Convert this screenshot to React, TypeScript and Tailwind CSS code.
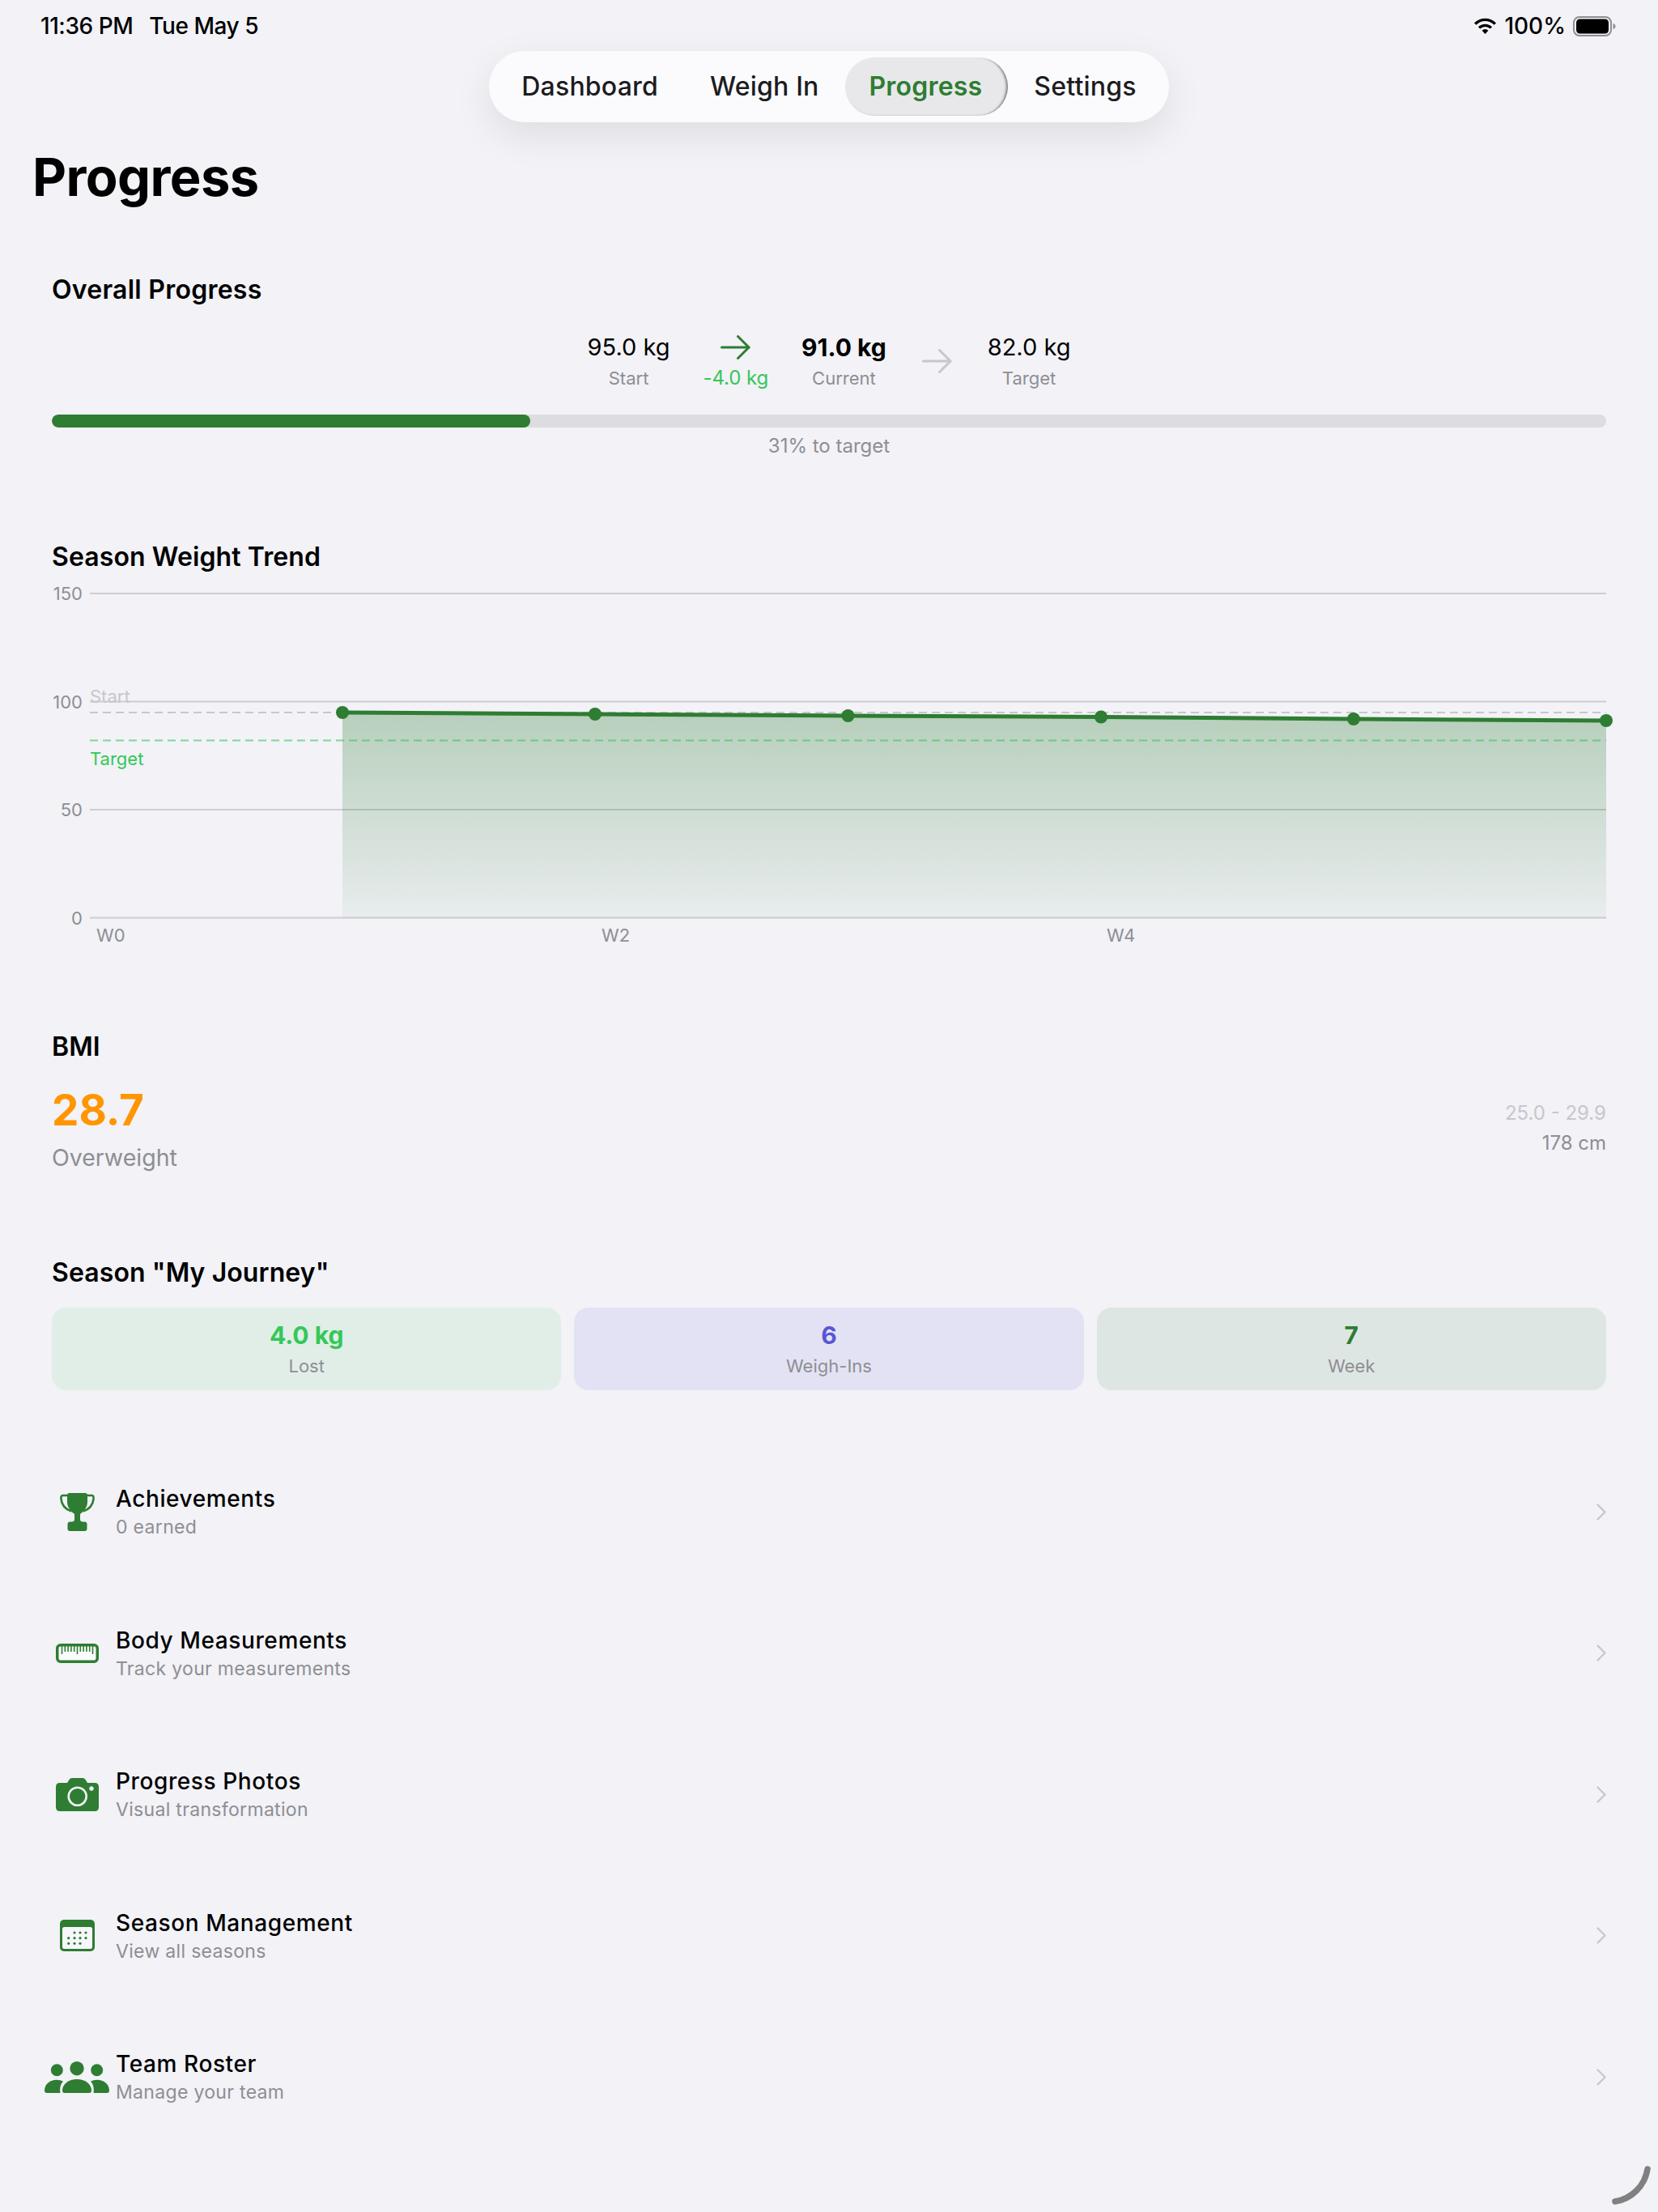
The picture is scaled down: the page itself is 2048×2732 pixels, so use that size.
import React from 'react';

const green = '#2e7d32';
const points = [
  [423, 880],
  [735, 882],
  [1047.5, 884],
  [1360, 885.5],
  [1672, 888],
  [1984, 890],
];

function Wifi() {
  return (
    <svg width="29" height="20" viewBox="0 0 29 20" className="shrink-0" fill="none" stroke="#000" strokeWidth="3.4">
      <path d="M2.2 7.6A17 17 0 0 1 26.8 7.6" />
      <path d="M7.1 12.4A10.5 10.5 0 0 1 21.9 12.4" />
      <path d="M14.5 20L10.6 15.7A5.5 5.5 0 0 1 18.4 15.7Z" fill="#000" stroke="none" />
    </svg>
  );
}

function Battery() {
  return (
    <svg width="53" height="25" viewBox="0 0 53 25" className="shrink-0">
      <rect x="1" y="1" width="46" height="23" rx="7" fill="none" stroke="#8e8e93" strokeWidth="2" />
      <rect x="4" y="3.5" width="40" height="18" rx="4.5" fill="#000" />
      <path d="M49.5 9C51.5 9.5 52.5 11 52.5 12.5C52.5 14 51.5 15.5 49.5 16Z" fill="#8e8e93" />
    </svg>
  );
}

function Arrow({ color }: { color: string }) {
  return (
    <svg width="37" height="30" viewBox="0 0 37 30" fill="none" stroke={color} strokeWidth="3" strokeLinecap="round" strokeLinejoin="round">
      <path d="M1.5 15H35" />
      <path d="M21.5 1.5L35 15L21.5 28.5" />
    </svg>
  );
}

function Trophy() {
  return (
    <svg width="43" height="47" viewBox="0 0 43 47" fill={green}>
      <path d="M10 3H3.5C1.5 3 1.2 5 1.6 8C2.4 15 7 20 14 22.5M33 3H39.5C41.5 3 41.8 5 41.4 8C40.6 15 36 20 29 22.5" fill="none" stroke={green} strokeWidth="2.6" />
      <path d="M9 3Q9 0 12 0H31Q34 0 34 3V11C34 18 29 23 25 26V33Q25 35 28 36H15Q18 35 18 33V26C14 23 9 18 9 11Z" />
      <rect x="9.5" y="35.5" width="24" height="11.5" rx="3" />
    </svg>
  );
}

function Ruler() {
  const ticks = Array.from({ length: 11 }, (_, i) => 7.5 + i * 3.8);
  return (
    <svg width="53" height="24" viewBox="0 0 53 24" fill="none" stroke={green}>
      <rect x="1.75" y="1.75" width="49.5" height="20.5" rx="4" strokeWidth="3.5" fill="#fbfbfd" />
      {ticks.map((x, i) => (
        <path key={x} d={`M${x} 3V${i % 5 === 0 ? 13 : 10}`} strokeWidth="1.6" />
      ))}
    </svg>
  );
}

function Camera() {
  return (
    <svg width="53" height="41" viewBox="0 0 53 41">
      <path d="M5 6H14L16.5 2Q17.7 0 20 0H33Q35.3 0 36.5 2L39 6H48Q53 6 53 11V36Q53 41 48 41H5Q0 41 0 36V11Q0 6 5 6Z" fill={green} />
      <circle cx="26.7" cy="22.7" r="11" fill="none" stroke="#f2f2f7" strokeWidth="2.6" />
      <circle cx="44" cy="13" r="2.7" fill="#f2f2f7" />
    </svg>
  );
}

function Calendar() {
  const dots = [
    [18, 16], [25, 16], [32, 16],
    [10.7, 22.7], [18, 22.7], [25, 22.7], [32, 22.7],
    [10.7, 29.3], [18, 29.3], [25, 29.3],
  ];
  return (
    <svg width="43" height="39" viewBox="0 0 43 39">
      <rect width="43" height="39" rx="5" fill={green} />
      <rect x="3" y="9" width="37" height="27" rx="2.5" fill="#f7f7fb" />
      {dots.map(([x, y]) => (
        <circle key={`${x}-${y}`} cx={x} cy={y} r="1.6" fill={green} />
      ))}
    </svg>
  );
}

function People() {
  return (
    <svg width="80" height="39" viewBox="0 0 80 39" fill={green} className="shrink-0">
      <circle cx="40" cy="8.7" r="8.7" />
      <circle cx="15.3" cy="10.7" r="7.5" />
      <circle cx="64.7" cy="10.7" r="7.5" />
      <path d="M22 36C22 28 30 22 40 22C50 22 58 28 58 36Q58 39 55 39H25Q22 39 22 36Z" />
      <path d="M0 36C0 28 7 22.7 15 22.7C18 22.7 21 23.4 23 24.8C20 28 18.6 32 19.4 39H3Q0 39 0 36Z" />
      <path d="M80 36C80 28 73 22.7 65 22.7C62 22.7 59 23.4 57 24.8C60 28 61.4 32 60.6 39H77Q80 39 80 36Z" />
    </svg>
  );
}

function Chevron() {
  return (
    <svg width="12" height="21" viewBox="0 0 12 21" fill="none" stroke="#c7c7cc" strokeWidth="2.4" strokeLinecap="round" strokeLinejoin="round" className="shrink-0">
      <path d="M1.5 1.5L10.5 10.5L1.5 19.5" />
    </svg>
  );
}

function TrendChart() {
  const line = points.map(([x, y]) => `${x},${y}`).join(' ');
  const area = `M423 880 L${points.slice(1).map(([x, y]) => `${x} ${y}`).join(' L')} L1984 1133.5 L423 1133.5 Z`;
  const grid = [733, 866.5, 1000, 1133.5];
  const axis = 'fill-[#8e8e93] text-[22px]';
  return (
    <svg className="block w-[1920px] h-[470px] overflow-visible" viewBox="64 709 1920 470">
      <defs>
        <linearGradient id="fade" x1="0" y1="0" x2="0" y2="1">
          <stop offset="0" stopColor={green} stopOpacity="0.3" />
          <stop offset="1" stopColor={green} stopOpacity="0.05" />
        </linearGradient>
      </defs>
      <path d={area} fill="url(#fade)" />
      {grid.map((y) => (
        <path key={y} d={`M111 ${y}H1984`} stroke="#3c3c43" strokeOpacity="0.2" strokeWidth="2" />
      ))}
      <path d="M111 880H1984" stroke="#c7c7cc" strokeWidth="2" strokeDasharray="10 6" />
      <path d="M111 914.5H1984" stroke="#34c759" strokeOpacity="0.6" strokeWidth="2" strokeDasharray="10 6" />
      <polyline points={line} fill="none" stroke={green} strokeWidth="5" />
      {points.map(([x, y]) => (
        <circle key={x} cx={x} cy={y} r="8" fill={green} />
      ))}
      <text x="102" y="741" textAnchor="end" className={axis}>150</text>
      <text x="102" y="875" textAnchor="end" className={axis}>100</text>
      <text x="102" y="1008" textAnchor="end" className={axis}>50</text>
      <text x="102" y="1142" textAnchor="end" className={axis}>0</text>
      <text x="119" y="1163" className={axis}>W0</text>
      <text x="743" y="1163" className={axis}>W2</text>
      <text x="1367" y="1163" className={axis}>W4</text>
      <text x="111" y="868" className="fill-[#c7c7cc] text-[22px]">Start</text>
      <text x="111" y="945" className="fill-[#34c759] text-[22px]">Target</text>
    </svg>
  );
}

const navItems = ['Dashboard', 'Weigh In', 'Progress', 'Settings'];

const links = [
  { title: 'Achievements', sub: '0 earned', icon: <Trophy /> },
  { title: 'Body Measurements', sub: 'Track your measurements', icon: <Ruler /> },
  { title: 'Progress Photos', sub: 'Visual transformation', icon: <Camera /> },
  { title: 'Season Management', sub: 'View all seasons', icon: <Calendar /> },
  { title: 'Team Roster', sub: 'Manage your team', icon: <People /> },
];

function Stat({ value, label, strong }: { value: string; label: string; strong?: boolean }) {
  return (
    <div className="flex flex-col items-center">
      <div className={strong ? 'text-[30px] leading-[38px] font-bold text-black' : 'text-[29px] leading-[38px] font-normal text-black'}>{value}</div>
      <div className="mt-[4px] text-[22px] leading-[30px] text-[#8e8e93]">{label}</div>
    </div>
  );
}

export default function App() {
  return (
    <div className="relative h-[2732px] w-full overflow-hidden bg-[#f2f2f7] font-['Inter',sans-serif] text-black">
      {/* Status bar */}
      <div className="flex h-[63px] items-start justify-between pl-[50px] pr-[52px] pt-[15px] text-[28px] leading-[34px] font-medium">
        <div className="flex gap-[20px] tracking-[-0.45px]">
          <span>11:36 PM</span>
          <span>Tue May 5</span>
        </div>
        <div className="flex items-center gap-[9px] h-[34px]">
          <Wifi />
          <span>100%</span>
          <Battery />
        </div>
      </div>

      {/* Tabs */}
      <div className="flex justify-center">
        <nav className="flex h-[88px] items-center rounded-full bg-[#fbfbfe] px-[8px] tracking-[0.2px] shadow-[0_16px_48px_rgba(0,0,0,0.09)]">
          {navItems.map((item) => (
            <div
              key={item}
              className={
                item === 'Progress'
                  ? 'flex h-[72px] items-center rounded-full bg-[#e8e8eb] pl-[30px] pr-[32px] text-[32px] font-semibold text-[#2e7d32] shadow-[inset_-4px_0_3px_-2px_rgba(0,0,0,0.45),inset_0_-2px_2px_-1px_rgba(0,0,0,0.08)]'
                  : 'flex h-[72px] items-center px-[32px] text-[32px] font-medium text-[#1c1c1e]'
              }
            >
              {item}
            </div>
          ))}
        </nav>
      </div>

      <h1 className="ml-[40px] mt-[27px] text-[65px] leading-[82px] font-bold tracking-[-0.6px]">Progress</h1>

      <div className="px-[64px]">
        {/* Overall */}
        <h2 className="mt-[77px] text-[32px] leading-[42px] font-semibold tracking-[0.25px]">Overall Progress</h2>
        <div className="mt-[31px] flex items-center justify-center gap-[41px]">
          <Stat value="95.0 kg" label="Start" />
          <div className="flex flex-col items-center">
            <div className="flex h-[38px] items-center">
              <Arrow color="#2e7d32" />
            </div>
            <div className="mt-[4px] text-[24px] leading-[30px] tracking-[-0.1px] text-[#34c759]">-4.0 kg</div>
          </div>
          <Stat value="91.0 kg" label="Current" strong />
          <div className="ml-[3px] mr-[3px] flex">
            <Arrow color="#c7c7cc" />
          </div>
          <Stat value="82.0 kg" label="Target" />
        </div>
        <div className="mt-[30px] h-[16px] overflow-hidden rounded-full bg-[#dcdce1]">
          <div className="h-full w-[30.77%] rounded-full bg-[#2e7d32]" />
        </div>
        <div className="mt-[8px] text-center text-[24px] leading-[30px] text-[#8e8e93]">31% to target</div>

        {/* Trend */}
        <h2 className="mt-[101px] text-[32px] leading-[42px] font-semibold tracking-[0.1px]">Season Weight Trend</h2>
        <TrendChart />

        {/* BMI */}
        <h2 className="mt-[93px] text-[32px] leading-[42px] font-semibold tracking-[0.1px]">BMI</h2>
        <div className="flex items-start justify-between">
          <div>
            <div className="mt-[23px] text-[53px] leading-[68px] font-bold text-[#ff9500]">28.7</div>
            <div className="mt-[5px] text-[28.5px] leading-[40px] text-[#8e8e93]">Overweight</div>
          </div>
          <div className="mt-[45px] flex flex-col items-end gap-[5px] text-[24px] leading-[32px]">
            <div className="text-[#c7c7cc]">25.0 - 29.9</div>
            <div className="text-[#8e8e93]">178 cm</div>
          </div>
        </div>

        {/* Season */}
        <h2 className="mt-[101px] text-[32px] leading-[42px] font-semibold tracking-[0.1px]">Season "My Journey"</h2>
        <div className="mt-[22px] grid grid-cols-3 gap-[16px]">
          <div className="flex h-[102px] flex-col items-center justify-center gap-[5px] rounded-[18px] bg-[#e0eee7]">
            <div className="text-[30px] leading-[36px] font-bold text-[#34c759]">4.0 kg</div>
            <div className="text-[22px] leading-[30px] text-[#8e8e93]">Lost</div>
          </div>
          <div className="flex h-[102px] flex-col items-center justify-center gap-[5px] rounded-[18px] bg-[#e3e2f4]">
            <div className="text-[30px] leading-[36px] font-bold text-[#5856d6]">6</div>
            <div className="text-[22px] leading-[30px] text-[#8e8e93]">Weigh-Ins</div>
          </div>
          <div className="flex h-[102px] flex-col items-center justify-center gap-[5px] rounded-[18px] bg-[#dee6e3]">
            <div className="text-[30px] leading-[36px] font-bold text-[#2e7d32]">7</div>
            <div className="text-[22px] leading-[30px] text-[#8e8e93]">Week</div>
          </div>
        </div>

        {/* Links */}
        <div className="mt-[63px]">
          {links.map((link) => (
            <div key={link.title} className="flex h-[174.5px] items-center">
              <div className="flex w-[62px] shrink-0 justify-center">{link.icon}</div>
              <div className="ml-[17px] flex-1">
                <div className="text-[28px] leading-[38px] font-medium tracking-[0.6px]">{link.title}</div>
                <div className="text-[23px] leading-[32px] tracking-[0.32px] text-[#8e8e93]">{link.sub}</div>
              </div>
              <Chevron />
            </div>
          ))}
        </div>
      </div>

      {/* Corner scroll indicator */}
      <svg className="absolute bottom-0 right-0 h-[64px] w-[64px]" viewBox="1984 2668 64 64" fill="none">
        <path d="M2035 2679A48 48 0 0 1 1995 2719" stroke="#808080" strokeWidth="7.5" strokeLinecap="round" />
      </svg>
    </div>
  );
}
